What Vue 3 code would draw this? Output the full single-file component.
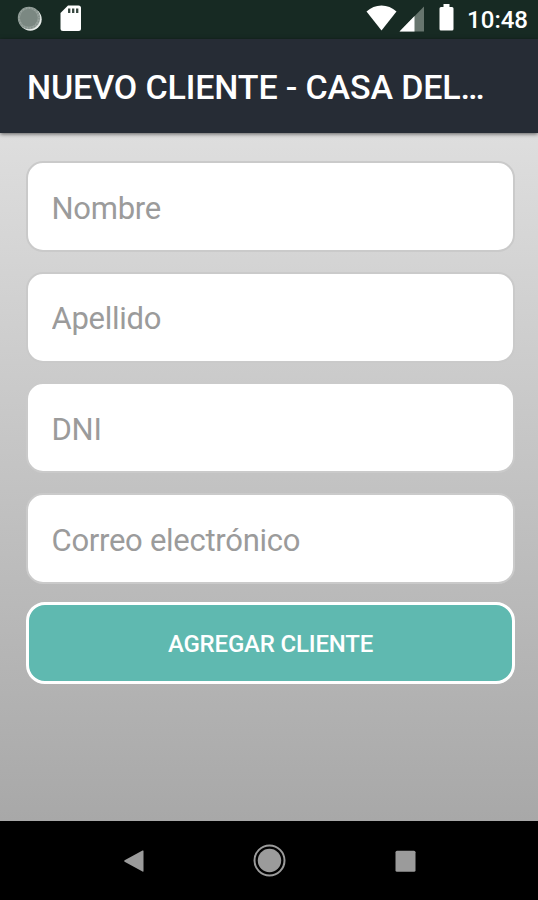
<script setup>
import { reactive } from 'vue'

const fields = [
  { key: 'nombre', label: 'Nombre', type: 'text' },
  { key: 'apellido', label: 'Apellido', type: 'text' },
  { key: 'dni', label: 'DNI', type: 'text' },
  { key: 'correo', label: 'Correo electrónico', type: 'email' }
]

const cliente = reactive({ nombre: '', apellido: '', dni: '', correo: '' })
</script>

<template>
  <div class="screen">
    <header class="status-bar">
      <div class="status-bar__left">
        <svg class="icon-sync" width="26" height="26" viewBox="0 0 26 26">
          <circle cx="13.3" cy="13.3" r="11.4" fill="#e6ebe8" />
          <circle cx="12" cy="12" r="11.2" fill="#98a39e" />
          <circle cx="11.8" cy="11.8" r="9" fill="#7b8882" />
          <circle cx="12" cy="12" r="10" fill="none" stroke="#84918b" stroke-width="1.5" stroke-dasharray="1.5 1.5" />
        </svg>
        <svg class="icon-sd" width="22" height="27" viewBox="0 0 22 27">
          <path d="M8 0.5H18.5Q21 0.5 21 3V23.5Q21 26 18.5 26H3Q0.5 26 0.5 23.5V8Z" fill="#fff" />
          <path d="M9.2 3.5V8M13.2 3.5V8M17.2 3.5V8" stroke="#35463e" stroke-width="2.3" />
        </svg>
      </div>
      <div class="status-bar__right">
        <svg class="icon-wifi" width="31" height="26" viewBox="0 0 31 26">
          <path d="M0.5 6.5Q7 0.5 15.5 0.5T30.5 6.5L15.5 25.5Z" fill="#fff" />
        </svg>
        <svg class="icon-signal" width="26" height="26" viewBox="0 0 26 26">
          <path d="M25 0.5V25.5H0.5Z" fill="#67756e" />
          <path d="M15.5 10V25.5H0.5Z" fill="#fff" />
        </svg>
        <svg class="icon-battery" width="15" height="27" viewBox="0 0 15 27">
          <path d="M4.5 0H10.5V3H13Q14.5 3 14.5 4.5V25Q14.5 26.5 13 26.5H2Q0.5 26.5 0.5 25V4.5Q0.5 3 2 3H4.5Z" fill="#fff" />
        </svg>
        <span class="clock">10:48</span>
      </div>
    </header>

    <div class="toolbar">
      <h1 class="toolbar__title">NUEVO CLIENTE - CASA DEL…</h1>
    </div>

    <form class="content" @submit.prevent>
      <input
        v-for="field in fields"
        :key="field.key"
        v-model="cliente[field.key]"
        class="field"
        :type="field.type"
        :placeholder="field.label"
      />
      <button class="submit-btn" type="submit">AGREGAR CLIENTE</button>
    </form>

    <nav class="nav-bar">
      <svg width="34" height="34" viewBox="0 0 34 34">
        <path d="M26.5 6.6Q27.5 6 27.5 7V27Q27.5 28 26.5 27.4L8.6 17.8Q7.6 17 8.6 16.2Z" fill="#9b9b9b" />
      </svg>
      <svg width="34" height="34" viewBox="0 0 34 34">
        <circle cx="17.5" cy="16.5" r="15" fill="none" stroke="#9b9b9b" stroke-width="2" />
        <circle cx="17.5" cy="16.5" r="11.7" fill="#9b9b9b" />
      </svg>
      <svg width="34" height="34" viewBox="0 0 34 34">
        <rect x="7.5" y="6.7" width="20" height="21" rx="1.5" fill="#9b9b9b" />
      </svg>
    </nav>
  </div>
</template>

<style>
body {
  margin: 0;
}
</style>

<style scoped>
.screen {
  display: flex;
  flex-direction: column;
  height: 900px;
  overflow: hidden;
  font-family: Roboto, "Liberation Sans", sans-serif;
}

.status-bar {
  display: flex;
  justify-content: space-between;
  flex: none;
  box-sizing: border-box;
  height: 39px;
  padding: 0 10px 0 17px;
  background: #172a23;
}

.status-bar__left,
.status-bar__right {
  display: flex;
  align-items: flex-start;
}

.icon-sync {
  margin-top: 6px;
}

.icon-sd {
  margin: 5px 0 0 17px;
}

.icon-wifi {
  margin-top: 5px;
}

.icon-signal {
  margin: 6px 0 0 2px;
}

.icon-battery {
  margin: 4px 0 0 14px;
}

.clock {
  margin: 5px 0 0 13px;
  color: #fff;
  font-size: 24px;
  font-weight: 500;
  line-height: 30px;
}

.toolbar {
  position: relative;
  display: flex;
  flex: none;
  align-items: center;
  height: 94px;
  padding: 2px 27px 0;
  box-sizing: border-box;
  background: #262c35;
  box-shadow: 0 1px 4px rgba(0, 0, 0, 0.6);
}

.toolbar__title {
  margin: 0;
  color: #fff;
  font-size: 34px;
  font-weight: 500;
  letter-spacing: -0.13px;
  white-space: nowrap;
}

.content {
  display: flex;
  flex: 1;
  flex-direction: column;
  box-sizing: border-box;
  padding: 28px 23px 0 26px;
  background: linear-gradient(#dedede, #a8a8a8);
}

.field {
  box-sizing: border-box;
  width: 488.5px;
  height: 91px;
  margin: 0 0 19.7px;
  padding: 3px 24px 0 23.5px;
  border: 2px solid #cacaca;
  border-radius: 17px;
  outline: none;
  background: #fff;
  color: #333;
  font-family: inherit;
  font-size: 31px;
  letter-spacing: -0.28px;
}

.field::placeholder {
  color: #9b9b9b;
  opacity: 1;
}

.submit-btn {
  box-sizing: border-box;
  height: 82px;
  margin-top: -2px;
  padding-top: 3px;
  border: 3px solid #fff;
  border-radius: 19px;
  background: #5fb9b0;
  color: #fff;
  font-family: inherit;
  font-size: 24px;
  font-weight: 500;
  letter-spacing: -0.18px;
}

.nav-bar {
  display: flex;
  flex: none;
  align-items: center;
  justify-content: center;
  gap: 102px;
  height: 79px;
  background: #000;
}
</style>
